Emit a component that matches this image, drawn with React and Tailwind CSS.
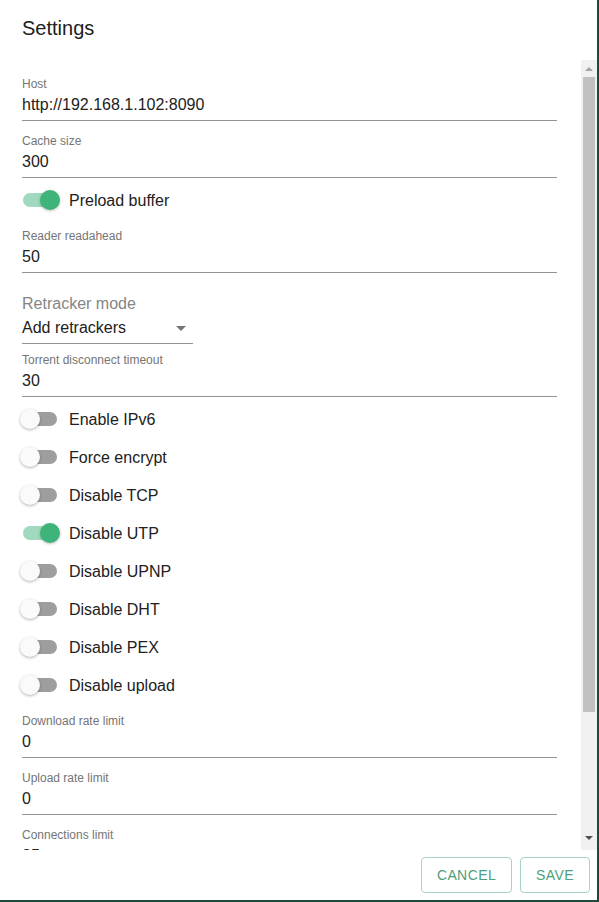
import clsx from 'clsx';

const toggles = [
  { label: 'Enable IPv6', on: false },
  { label: 'Force encrypt', on: false },
  { label: 'Disable TCP', on: false },
  { label: 'Disable UTP', on: true },
  { label: 'Disable UPNP', on: false },
  { label: 'Disable DHT', on: false },
  { label: 'Disable PEX', on: false },
  { label: 'Disable upload', on: false },
];

function TextField({ label, value, className }) {
  return (
    <div className={clsx('border-b border-[#949494] pb-[6px] pt-[2px]', className)}>
      <div className="text-[12px] leading-[14px] text-[#757575]">{label}</div>
      <div className="mt-[4px] text-[16px] leading-[19px] text-[#212121]">{value}</div>
    </div>
  );
}

function Toggle({ label, on }) {
  return (
    <label className="-ml-[11px] flex h-[38px] items-center">
      <span className="relative block h-[38px] w-[58px] shrink-0">
        <span
          className={clsx(
            'absolute left-[12px] top-[12px] h-[14px] w-[34px] rounded-full',
            on ? 'bg-[#a0d9bd]' : 'bg-[#9e9e9e]'
          )}
        />
        <span
          className={clsx(
            'absolute top-[9px] h-[20px] w-[20px] rounded-full',
            on
              ? 'left-[29px] bg-[#3fb47a] shadow-[0_1px_3px_rgba(0,0,0,0.25)]'
              : 'left-[9px] bg-[#fafafa] shadow-[0_1px_3px_rgba(0,0,0,0.3)]'
          )}
        />
      </span>
      <span className="text-[16px] leading-[19px] text-[#212121]">{label}</span>
    </label>
  );
}

function Scrollbar() {
  return (
    <div className="flex w-[16px] shrink-0 flex-col bg-[#f1f1f1]">
      <div className="flex h-[17px] items-center justify-center">
        <svg width="8" height="4" viewBox="0 0 8 4">
          <path d="M0 4L4 0L8 4z" fill="#a3a3a3" />
        </svg>
      </div>
      <div className="mx-[2px] h-[635px] bg-[#c1c1c1]" />
      <div className="flex-1" />
      <div className="flex h-[19px] items-start justify-center pt-[5px]">
        <svg width="8" height="4" viewBox="0 0 8 4">
          <path d="M0 0L8 0L4 4z" fill="#505050" />
        </svg>
      </div>
    </div>
  );
}

export default function App() {
  return (
    <div className="flex h-[902px] w-[599px] flex-col border-b-2 border-r-2 border-[#1e4a3c] bg-white font-['Liberation_Sans',Arial,sans-serif]">
      {/* Title */}
      <div className="h-[60px] shrink-0 px-[22px] pt-[12px] text-[20px] leading-[32px] text-[#212121]">
        Settings
      </div>

      {/* Scrolling content */}
      <div className="flex h-[790px] shrink-0">
        <div className="flex-1 overflow-hidden pl-[22px] pr-[24px] pt-[15px]">
          <TextField label="Host" value="http://192.168.1.102:8090" />
          <TextField label="Cache size" value="300" className="mt-[11px]" />
          <div className="mt-[3px]">
            <Toggle label="Preload buffer" on />
          </div>
          <TextField label="Reader readahead" value="50" className="mt-[8px]" />

          <div className="mt-[20px] w-[171px] border-b border-[#949494] pb-[6px] pt-[1px]">
            <div className="text-[16px] leading-[19px] text-[#858585]">Retracker mode</div>
            <div className="mt-[5px] flex h-[19px] items-center justify-between">
              <span className="text-[16px] leading-[19px] text-[#212121]">Add retrackers</span>
              <svg className="h-6 w-6" viewBox="0 0 24 24">
                <path d="M7 10l5 5 5-5z" fill="#757575" />
              </svg>
            </div>
          </div>

          <TextField label="Torrent disconnect timeout" value="30" className="mt-[7px]" />
          <div className="mt-[3px]">
            {toggles.map((t) => (
              <Toggle key={t.label} label={t.label} on={t.on} />
            ))}
          </div>
          <TextField label="Download rate limit" value="0" className="mt-[8px]" />
          <TextField label="Upload rate limit" value="0" className="mt-[11px]" />
          <TextField label="Connections limit" value="25" className="mt-[11px]" />
        </div>
        <Scrollbar />
      </div>

      {/* Actions */}
      <div className="flex flex-1 items-center justify-end gap-[8px] pr-[7px]">
        <button className="h-[36px] min-w-[64px] rounded-[4px] border border-[#a8d3c0] px-[15px] text-[14px] uppercase tracking-[0.4px] text-[#4f9e7c]">
          Cancel
        </button>
        <button className="h-[36px] min-w-[64px] rounded-[4px] border border-[#a8d3c0] px-[15px] text-[14px] uppercase tracking-[0.4px] text-[#4f9e7c]">
          Save
        </button>
      </div>
    </div>
  );
}
